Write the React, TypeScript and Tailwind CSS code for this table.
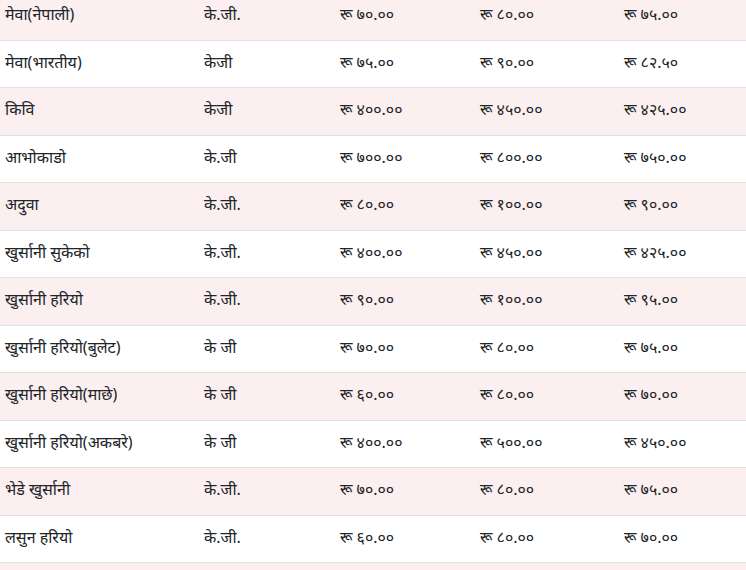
import React from 'react';

type Row = [string, string, string, string, string];

const rows: Row[] = [
  ['मेवा(नेपाली)', 'के.जी.', '७०.००', '८०.००', '७५.००'],
  ['मेवा(भारतीय)', 'केजी', '७५.००', '९०.००', '८२.५०'],
  ['किवि', 'केजी', '४००.००', '४५०.००', '४२५.००'],
  ['आभोकाडो', 'के.जी', '७००.००', '८००.००', '७५०.००'],
  ['अदुवा', 'के.जी.', '८०.००', '१००.००', '९०.००'],
  ['खुर्सानी सुकेको', 'के.जी.', '४००.००', '४५०.००', '४२५.००'],
  ['खुर्सानी हरियो', 'के.जी.', '९०.००', '१००.००', '९५.००'],
  ['खुर्सानी हरियो(बुलेट)', 'के जी', '७०.००', '८०.००', '७५.००'],
  ['खुर्सानी हरियो(माछे)', 'के जी', '६०.००', '८०.००', '७०.००'],
  ['खुर्सानी हरियो(अकबरे)', 'के जी', '४००.००', '५००.००', '४५०.००'],
  ['भेडे खुर्सानी', 'के.जी.', '७०.००', '८०.००', '७५.००'],
  ['लसुन हरियो', 'के.जी.', '६०.००', '८०.००', '७०.००'],
  ['', '', '', '', ''],
];

export default function App() {
  return (
    <div className="w-[746px] h-[570px] overflow-hidden bg-white text-[#212529] text-[16px] font-['Noto_Sans','Noto_Sans_Devanagari',sans-serif]">
      <div className="-mt-[7px]">
        {rows.map((r, i) => (
          <div
            key={i}
            className={`grid grid-cols-[199px_136px_140px_144px_1fr] items-center h-[47.5px] pl-[5px] pb-[4px] border-b border-[#dee2e6] ${
              i % 2 === 0 ? 'bg-[#fbeff0]' : 'bg-white'
            }`}
          >
            <span>{r[0]}</span>
            <span>{r[1]}</span>
            <span>{r[2] && `रू ${r[2]}`}</span>
            <span>{r[3] && `रू ${r[3]}`}</span>
            <span>{r[4] && `रू ${r[4]}`}</span>
          </div>
        ))}
      </div>
    </div>
  );
}
